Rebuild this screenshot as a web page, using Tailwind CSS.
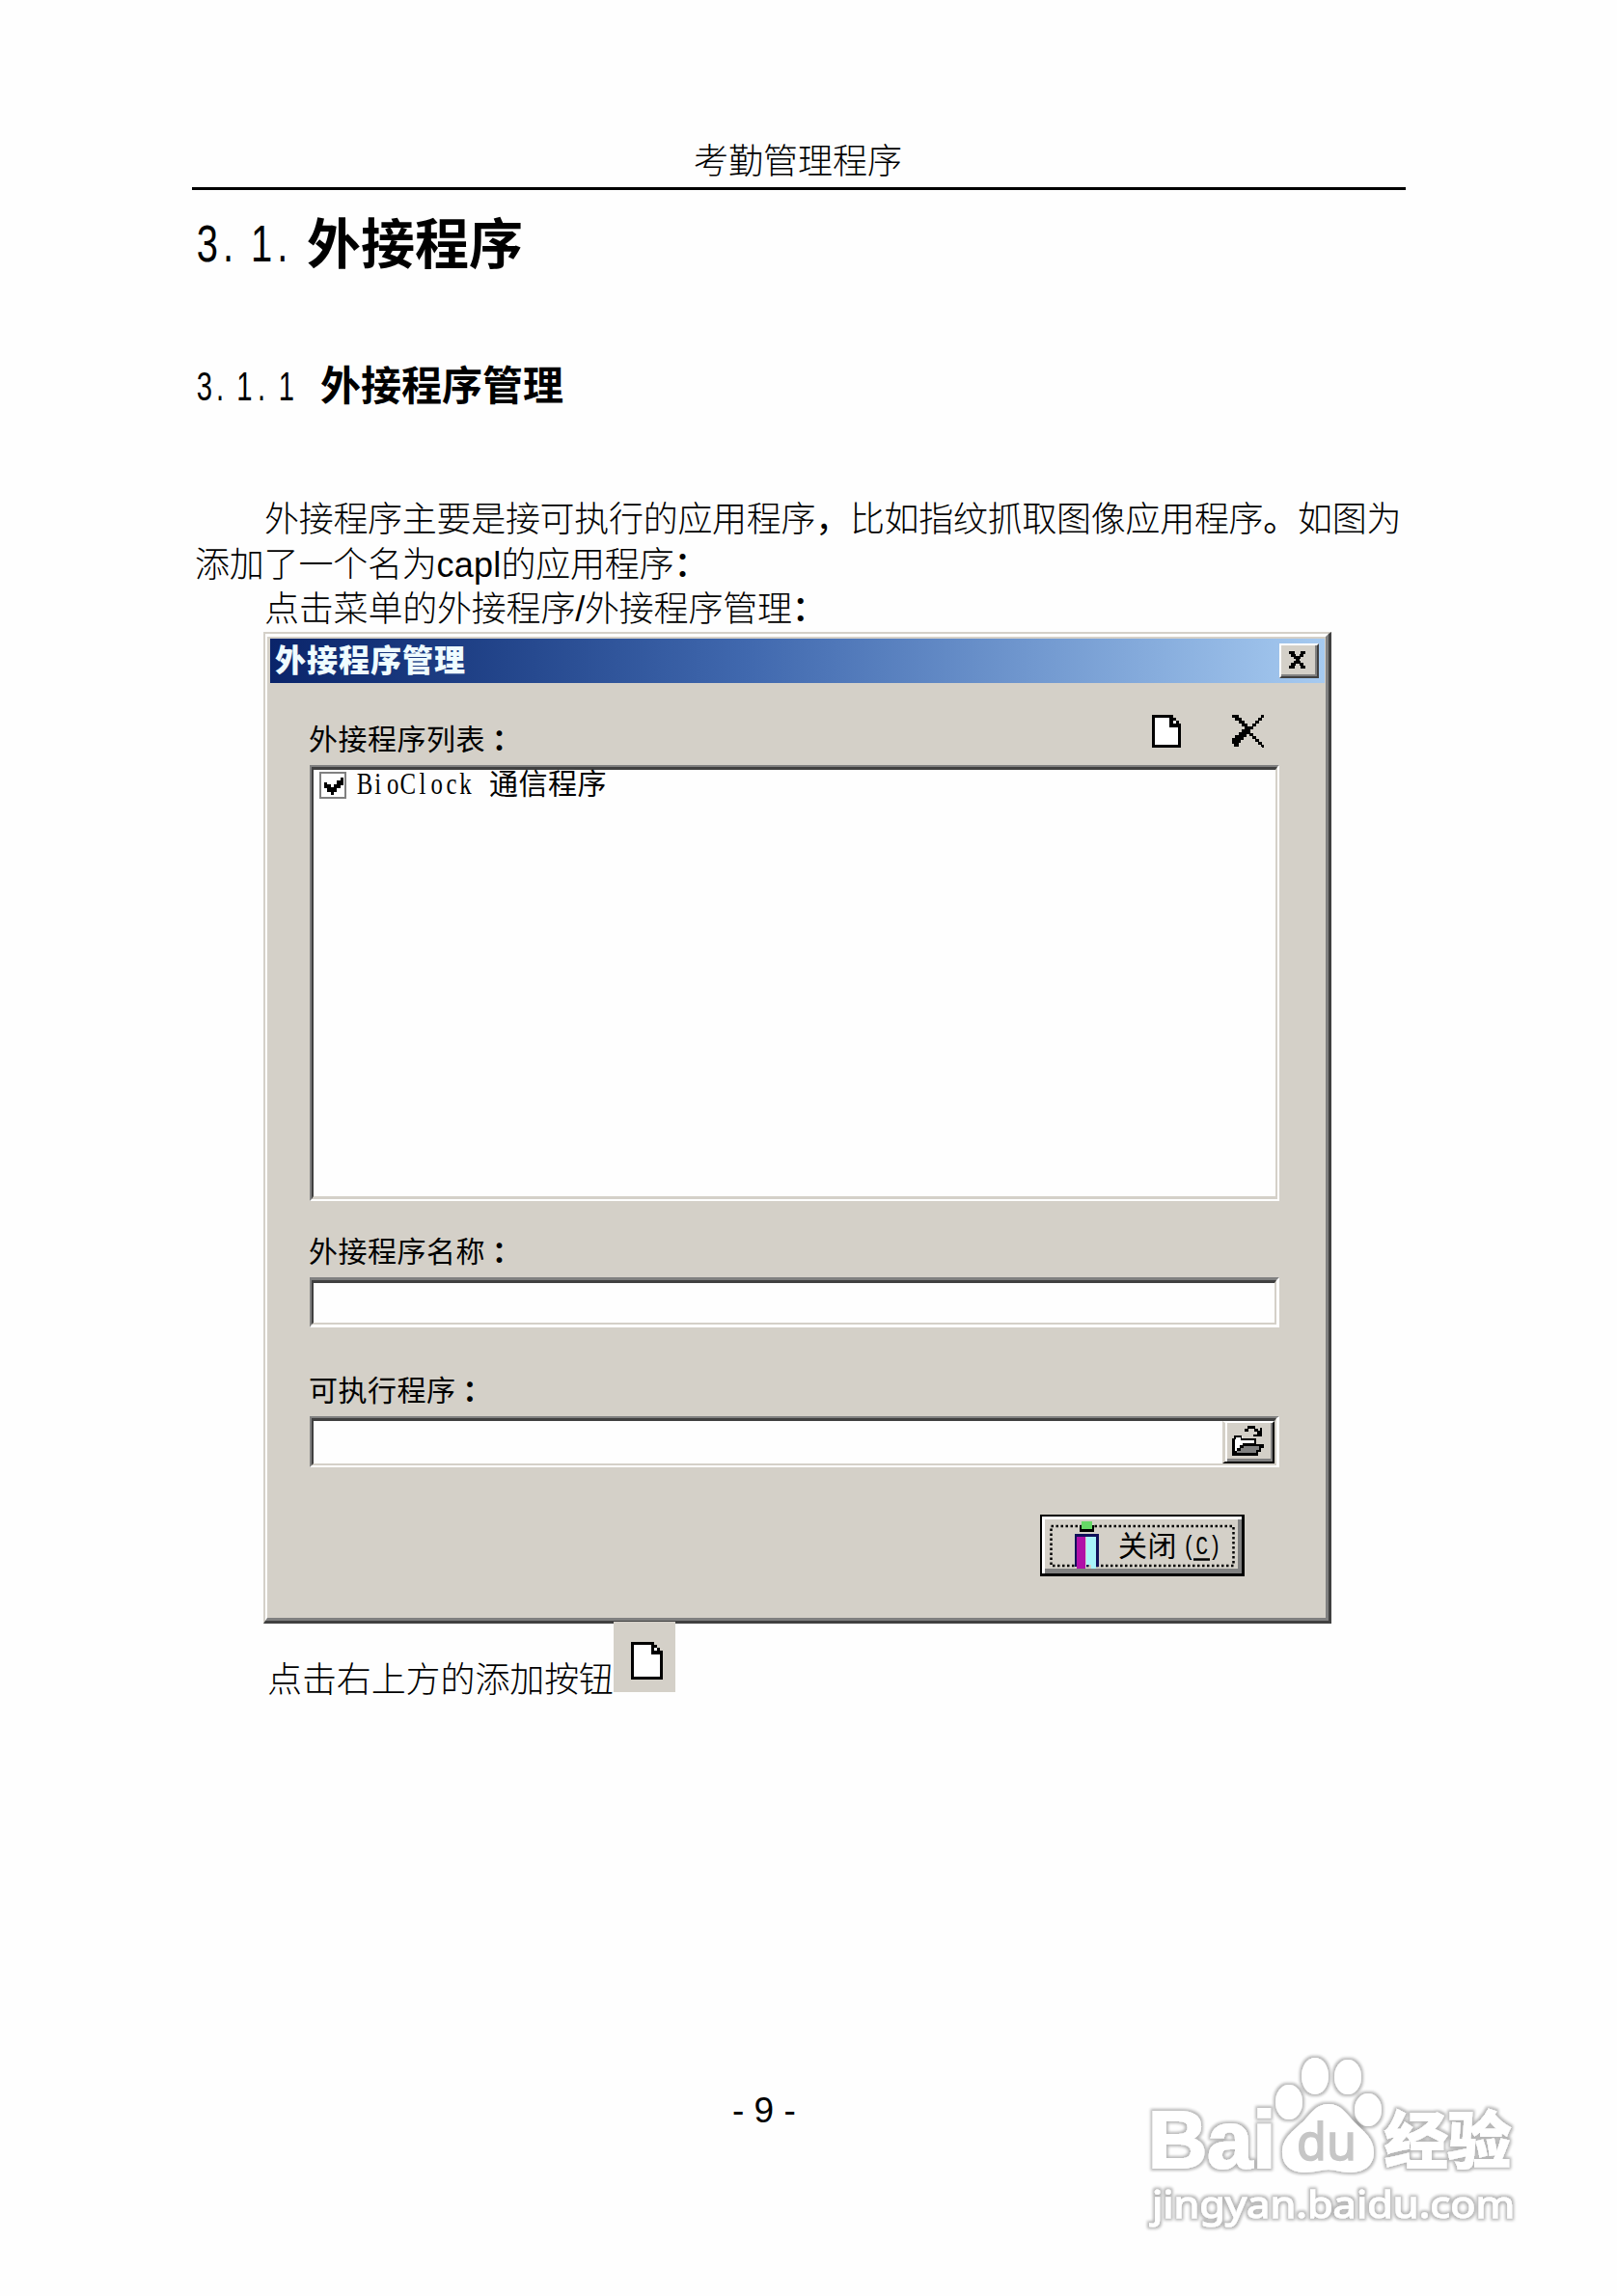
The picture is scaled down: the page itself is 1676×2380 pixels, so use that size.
<!DOCTYPE html>
<html lang="zh-CN">
<head>
  <meta charset="UTF-8" />
  <meta name="viewport" content="width=device-width, initial-scale=1.0" />
  <title>考勤管理程序</title>
  <script src="https://cdn.jsdelivr.net/npm/@tailwindcss/browser@4"></script>
</head>
<body class="bg-[#fefefe] text-black font-['Liberation_Sans','Noto_Sans_CJK_SC',sans-serif]">
  <div class="relative w-[1676px] h-[2380px] overflow-hidden pt-[143px] pl-[199px]">

    <!-- Page header -->
    <header class="w-[1258px] h-[54px] border-b-3 border-black pl-[520px] text-[36px] leading-[50px] font-light whitespace-nowrap">考勤管理程序</header>

    <!-- Headings -->
    <h1 class="flex h-[62px] mt-[23px] pl-[4px]">
      <svg class="w-[115px] h-[62px] shrink-0" viewBox="0 0 115 62">
        <text transform="scale(.74 1)" x="1 38 77 114" y="51" font-size="54" font-family="Liberation Sans">3.1.</text>
      </svg>
      <span class="mt-[3px] text-[56px] leading-[62px] font-bold whitespace-nowrap">外接程序</span>
    </h1>
    <h2 class="flex h-[50px] mt-[91px] pl-[4px]">
      <svg class="w-[129px] h-[50px] shrink-0" viewBox="0 0 129 50">
        <text transform="scale(.68 1)" x="1 31 62 94 126" y="42" font-size="43" font-family="Liberation Sans">3.1.1</text>
      </svg>
      <span class="mt-[3px] text-[42px] leading-[50px] font-bold whitespace-nowrap">外接程序管理</span>
    </h2>

    <!-- Body text -->
    <div class="mt-[93px] text-[36px] leading-[46.5px] font-light whitespace-nowrap tracking-[-0.2px]">
      <p class="pl-[75px] tracking-[-0.3px]">外接程序主要是接可执行的应用程序<span class="font-normal">，</span>比如指纹抓取图像应用程序<span class="font-normal">。</span>如图为</p>
      <p class="pl-[3px]">添加了一个名为<span class="font-normal tracking-[0.2px]">capl</span>的应用程序<span class="font-medium">：</span></p>
      <p class="pl-[75px]">点击菜单的外接程序<span class="font-normal">/</span>外接程序管理<span class="font-medium">：</span></p>
    </div>

    <!-- Dialog -->
    <section class="w-[1107px] h-[1028px] -mt-[0.5px] ml-[74px] border-t-2 border-l-2 border-r-3 border-b-3 border-t-[#d4d0c8] border-l-[#d4d0c8] border-r-[#404040] border-b-[#404040]">
      <div class="h-full bg-[#d4d0c8] border-t-3 border-l-2 border-r-3 border-b-3 border-t-white border-l-white border-r-[#808080] border-b-[#808080]">

        <div class="flex justify-between h-[46px] mt-[2px] ml-[3px] mr-[1px] pl-[5px] pr-[6px] pt-[5px] bg-linear-to-r from-[#0a246a] via-[#4068ae] via-45% to-[#a6caf0]">
          <span class="text-[32px] leading-[34px] font-black text-[#effcff] tracking-[1px] whitespace-nowrap mt-[1px]">外接程序管理</span>
          <button class="w-[41px] h-[36px] bg-[#d4d0c8] border-2 border-t-white border-l-white border-r-[#404040] border-b-[#404040] shadow-[inset_-2px_-2px_0_#808080]">
            <svg class="w-[18px] h-[18px] ml-[8px] -mt-[2px]" viewBox="0 0 22 18" preserveAspectRatio="none" shape-rendering="crispEdges">
              <path d="M0 0h7v3h2v2h4v-2h2v-3h6v3h-3v3h-3v2h-2v2h2v2h3v3h3v3h-6v-3h-2v-2h-4v2h-2v3h-7v-3h3v-3h3v-2h2v-2h-2v-2h-3v-3h-3z" />
            </svg>
          </button>
        </div>

        <div class="pl-[43px] text-[30px] leading-[36px] whitespace-nowrap tracking-[0.5px]">
          <div class="flex h-[85px] pl-[1px]">
            <span class="mt-[41px] -ml-[1px] w-[874px]">外接程序列表<span class="relative left-[7px] font-bold">：</span></span>
            <svg class="mt-[33px] w-[30px] h-[34px]" viewBox="0 0 30 34" shape-rendering="crispEdges">
              <path d="M1.5 1.5h18v10h9v21h-27z" fill="#fff" stroke="#000" stroke-width="3" />
              <path d="M19 0h3v3h3v3h3v3h2v3h-11z" />
              <path d="M22 6h3v3h-3z" fill="#fff" />
            </svg>
            <svg class="mt-[33px] ml-[53px] w-[33px] h-[34px]" viewBox="0 0 33 34" shape-rendering="crispEdges">
              <path d="M0 0h7v3h3v3h3v3h3v3h5v-3h3v-3h3v-3h3v-3h3v3h-2v3h-3v3h-3v3h-3v3h-3v4h3v3h3v3h3v3h3v3h2v2h-3v-2h-3v-3h-3v-3h-3v-3h-3v-2h-3v3h-3v3h-3v3h-2v4h-5v-3h-2v-6h3v-3h4v-3h3v-3h3v-3h-3v-3h-3v-3h-4v-3h-3z" />
              <path d="M31 32h2v2h-2z" />
            </svg>
          </div>

          <!-- List -->
          <div class="w-[1005px] ml-[1px] h-[452px] border-2 border-t-[#808080] border-l-[#808080] border-r-[#fefefe] border-b-[#fefefe]">
            <div class="flex h-full bg-[#fefefe] border-t-3 border-l-2 border-r-2 border-b-3 border-t-[#404040] border-l-[#404040] border-r-[#d4d0c8] border-b-[#d4d0c8]">
              <span class="mt-[2px] ml-[6px] w-[28px] h-[28px] border-2 border-[#808080] p-[3px]">
                <svg class="w-[20px] h-[20px]" viewBox="0 0 18 18" shape-rendering="crispEdges">
                  <path d="M0 5h3v2h3v3h3v-3h3v-3h3v-3h3v7h-3v3h-3v3h-3v3h-3v-3h-3v-3h-3z" />
                </svg>
              </span>
              <svg class="ml-[10px] w-[138px] h-[34px] tracking-normal" viewBox="0 0 138 34">
                <text transform="scale(.8 1)" x="1 24 40 57 82 97 117 134" y="25" font-size="31" font-family="Liberation Serif">BioClock</text>
              </svg>
              <span class="-mt-[3px]">通信程序</span>
            </div>
          </div>

          <p class="h-[79px] pt-[35px]">外接程序名称<span class="relative left-[7px] font-bold">：</span></p>
          <div class="w-[1005px] ml-[1px] h-[52px] border-t-3 border-l-2 border-r-3 border-b-3 border-t-[#808080] border-l-[#808080] border-r-[#fefefe] border-b-[#fefefe]">
            <div class="h-full bg-[#fefefe] border-t-3 border-l-2 border-r-2 border-b-2 border-t-[#404040] border-l-[#404040] border-r-[#d4d0c8] border-b-[#d4d0c8]"></div>
          </div>

          <p class="h-[92px] pt-[48px]">可执行程序<span class="relative left-[7px] font-bold">：</span></p>
          <div class="w-[1005px] ml-[1px] h-[53px] border-t-2 border-l-2 border-r-3 border-b-2 border-t-[#808080] border-l-[#808080] border-r-[#fefefe] border-b-[#fefefe]">
            <div class="flex justify-end h-full bg-[#fefefe] border-t-3 border-l-2 border-r-2 border-b-2 border-t-[#404040] border-l-[#404040] border-r-[#d4d0c8] border-b-[#d4d0c8]">
              <button class="w-[54px] h-[44px] bg-[#d4d0c8] border-t-2 border-l-3 border-r-2 border-b-2 border-t-white border-l-[#d4d0c8] border-r-black border-b-black shadow-[inset_2px_0_0_#fff,inset_-2px_-3px_0_#808080]">
                <svg class="w-[34px] h-[32px] ml-[7px] -mt-[2px]" viewBox="0 0 34 32" shape-rendering="crispEdges">
                  <path d="M2 30V13h2v-2h7v2h14v5h-14v3h-3v4h-3v5z" fill="#fff" />
                  <path d="M5 29v-4h3v-4h3v-2h20v3h-3v4h-3v4h-20z" fill="#808080" />
                  <path d="M0 31V13h2v-3h8v3h15v6h8v4h-3v4h-3v4zM3 26h2v-3h3v-3h3v-2h12v-3h-14v-3h-5v2h-1zM5 28h20v-3h3v-4h-16v2h-3v3h-4z" fill-rule="evenodd" />
                  <path d="M13 3h3v-3h8v3h3v2h2v-3h2v9h-9v-2h4v-3h-3v-3h-6v3h-4z" />
                </svg>
              </button>
            </div>
          </div>

          <!-- Close button -->
          <button class="flex w-[212px] h-[64px] mt-[49px] ml-[758px] bg-[#d4d0c8] border-3 border-t-2 border-l-2 border-black shadow-[inset_3px_3px_0_#fff,inset_-4px_-5px_0_#808080]">
            <svg class="w-[207px] h-[59px]" viewBox="0 0 207 59">
              <rect x="9.500" y="10" width="189" height="41" fill="none" stroke="#000" stroke-width="2.500" stroke-dasharray="2.500 2.500" />
              <g shape-rendering="crispEdges">
                <path d="M39 9h15v7h-15z" />
                <path d="M41 5h11v8h-11z" fill="#66d866" />
                <path d="M34 18h25v34h-3v-31h-8v31h-2v-31h-10v31h-2z" fill="#10105a" />
                <path d="M36 21h9v33h-9z" fill="#b010a8" />
                <path d="M46 21h10v33h-5v-4h-5z" fill="#a8f4fa" />
              </g>
              <text x="79" y="41" font-size="30" font-family="Noto Sans CJK SC">关闭</text>
              <text x="146" y="39" font-size="28" textLength="40" lengthAdjust="spacingAndGlyphs" font-family="Liberation Mono">(C)</text>
              <path d="M157 44.500h17" stroke="#000" stroke-width="2.500" />
            </svg>
          </button>
        </div>
      </div>
    </section>

    <!-- Text below the dialog -->
    <div class="flex -mt-[2px] pl-[79px] text-[36px] font-light whitespace-nowrap">
      <span class="mt-[36px] -ml-[1px] w-[359px] leading-[50px] tracking-[-0.1px]">点击右上方的添加按钮</span>
      <span class="w-[64px] h-[73px] bg-[#d4d0c8] pt-[21px] pl-[18px]">
        <svg class="w-[33px] h-[39px]" viewBox="0 0 33 39" shape-rendering="crispEdges">
          <path d="M1.500 1.500h21v10h9v26h-30z" fill="#fff" stroke="#000" stroke-width="3" />
          <path d="M21 0h3v3h3v3h3v3h3v3h-12z" />
          <path d="M24 6h3v3h-3z" fill="#fff" />
        </svg>
      </span>
    </div>

    <footer class="mt-[396px] pl-[560px] text-[37px] leading-[50px] whitespace-nowrap">- 9 -</footer>

    <!-- Watermark -->
    <svg class="absolute left-[1160px] top-[2110px] w-[440px] h-[220px]" viewBox="0 0 440 220">
      <defs>
        <filter id="halo" x="-15%" y="-15%" width="130%" height="130%">
          <feMorphology in="SourceAlpha" operator="dilate" radius="1.500" />
          <feGaussianBlur stdDeviation="1.700" />
          <feComponentTransfer result="b"><feFuncA type="linear" slope=".28" /></feComponentTransfer>
          <feGaussianBlur in="SourceGraphic" stdDeviation=".6" result="s" />
          <feMerge><feMergeNode in="b" /><feMergeNode in="s" /></feMerge>
        </filter>
      </defs>
      <g fill="#fff" font-family="Liberation Sans" font-weight="bold">
        <text filter="url(#halo)" x="30" y="137" font-size="84" textLength="132" lengthAdjust="spacingAndGlyphs" stroke="#fff" stroke-width="2">Bai</text>
        <ellipse filter="url(#halo)" cx="176" cy="69" rx="14" ry="18" />
        <ellipse filter="url(#halo)" cx="203" cy="42" rx="14" ry="19" />
        <ellipse filter="url(#halo)" cx="237" cy="43" rx="14" ry="18" />
        <ellipse filter="url(#halo)" cx="258" cy="77" rx="14" ry="17" />
        <path filter="url(#halo)" d="M217 71c12 0 17 8 25 17c8 9 22 17 22 33c0 15-12 21-25 21c-9 0-15-3-22-3s-15 3-24 3c-13 0-24-6-24-21c0-16 14-24 23-33c8-9 13-17 25-17z" />
        <text filter="url(#halo)" x="275" y="132" font-size="64" textLength="131" lengthAdjust="spacingAndGlyphs" font-family="Noto Sans CJK SC" stroke="#fff" stroke-width="2">经验</text>
        <text filter="url(#halo)" x="34" y="189" font-size="38" textLength="376" lengthAdjust="spacingAndGlyphs" font-family="Noto Sans" font-weight="normal" stroke="#fff">jingyan.baidu.com</text>
      </g>
      <text x="184" y="129" font-size="52" textLength="62" lengthAdjust="spacingAndGlyphs" fill="#c6c6c6" font-family="Noto Sans" font-weight="normal" stroke="#c6c6c6" stroke-width="1.500">du</text>
    </svg>
  </div>
</body>
</html>
